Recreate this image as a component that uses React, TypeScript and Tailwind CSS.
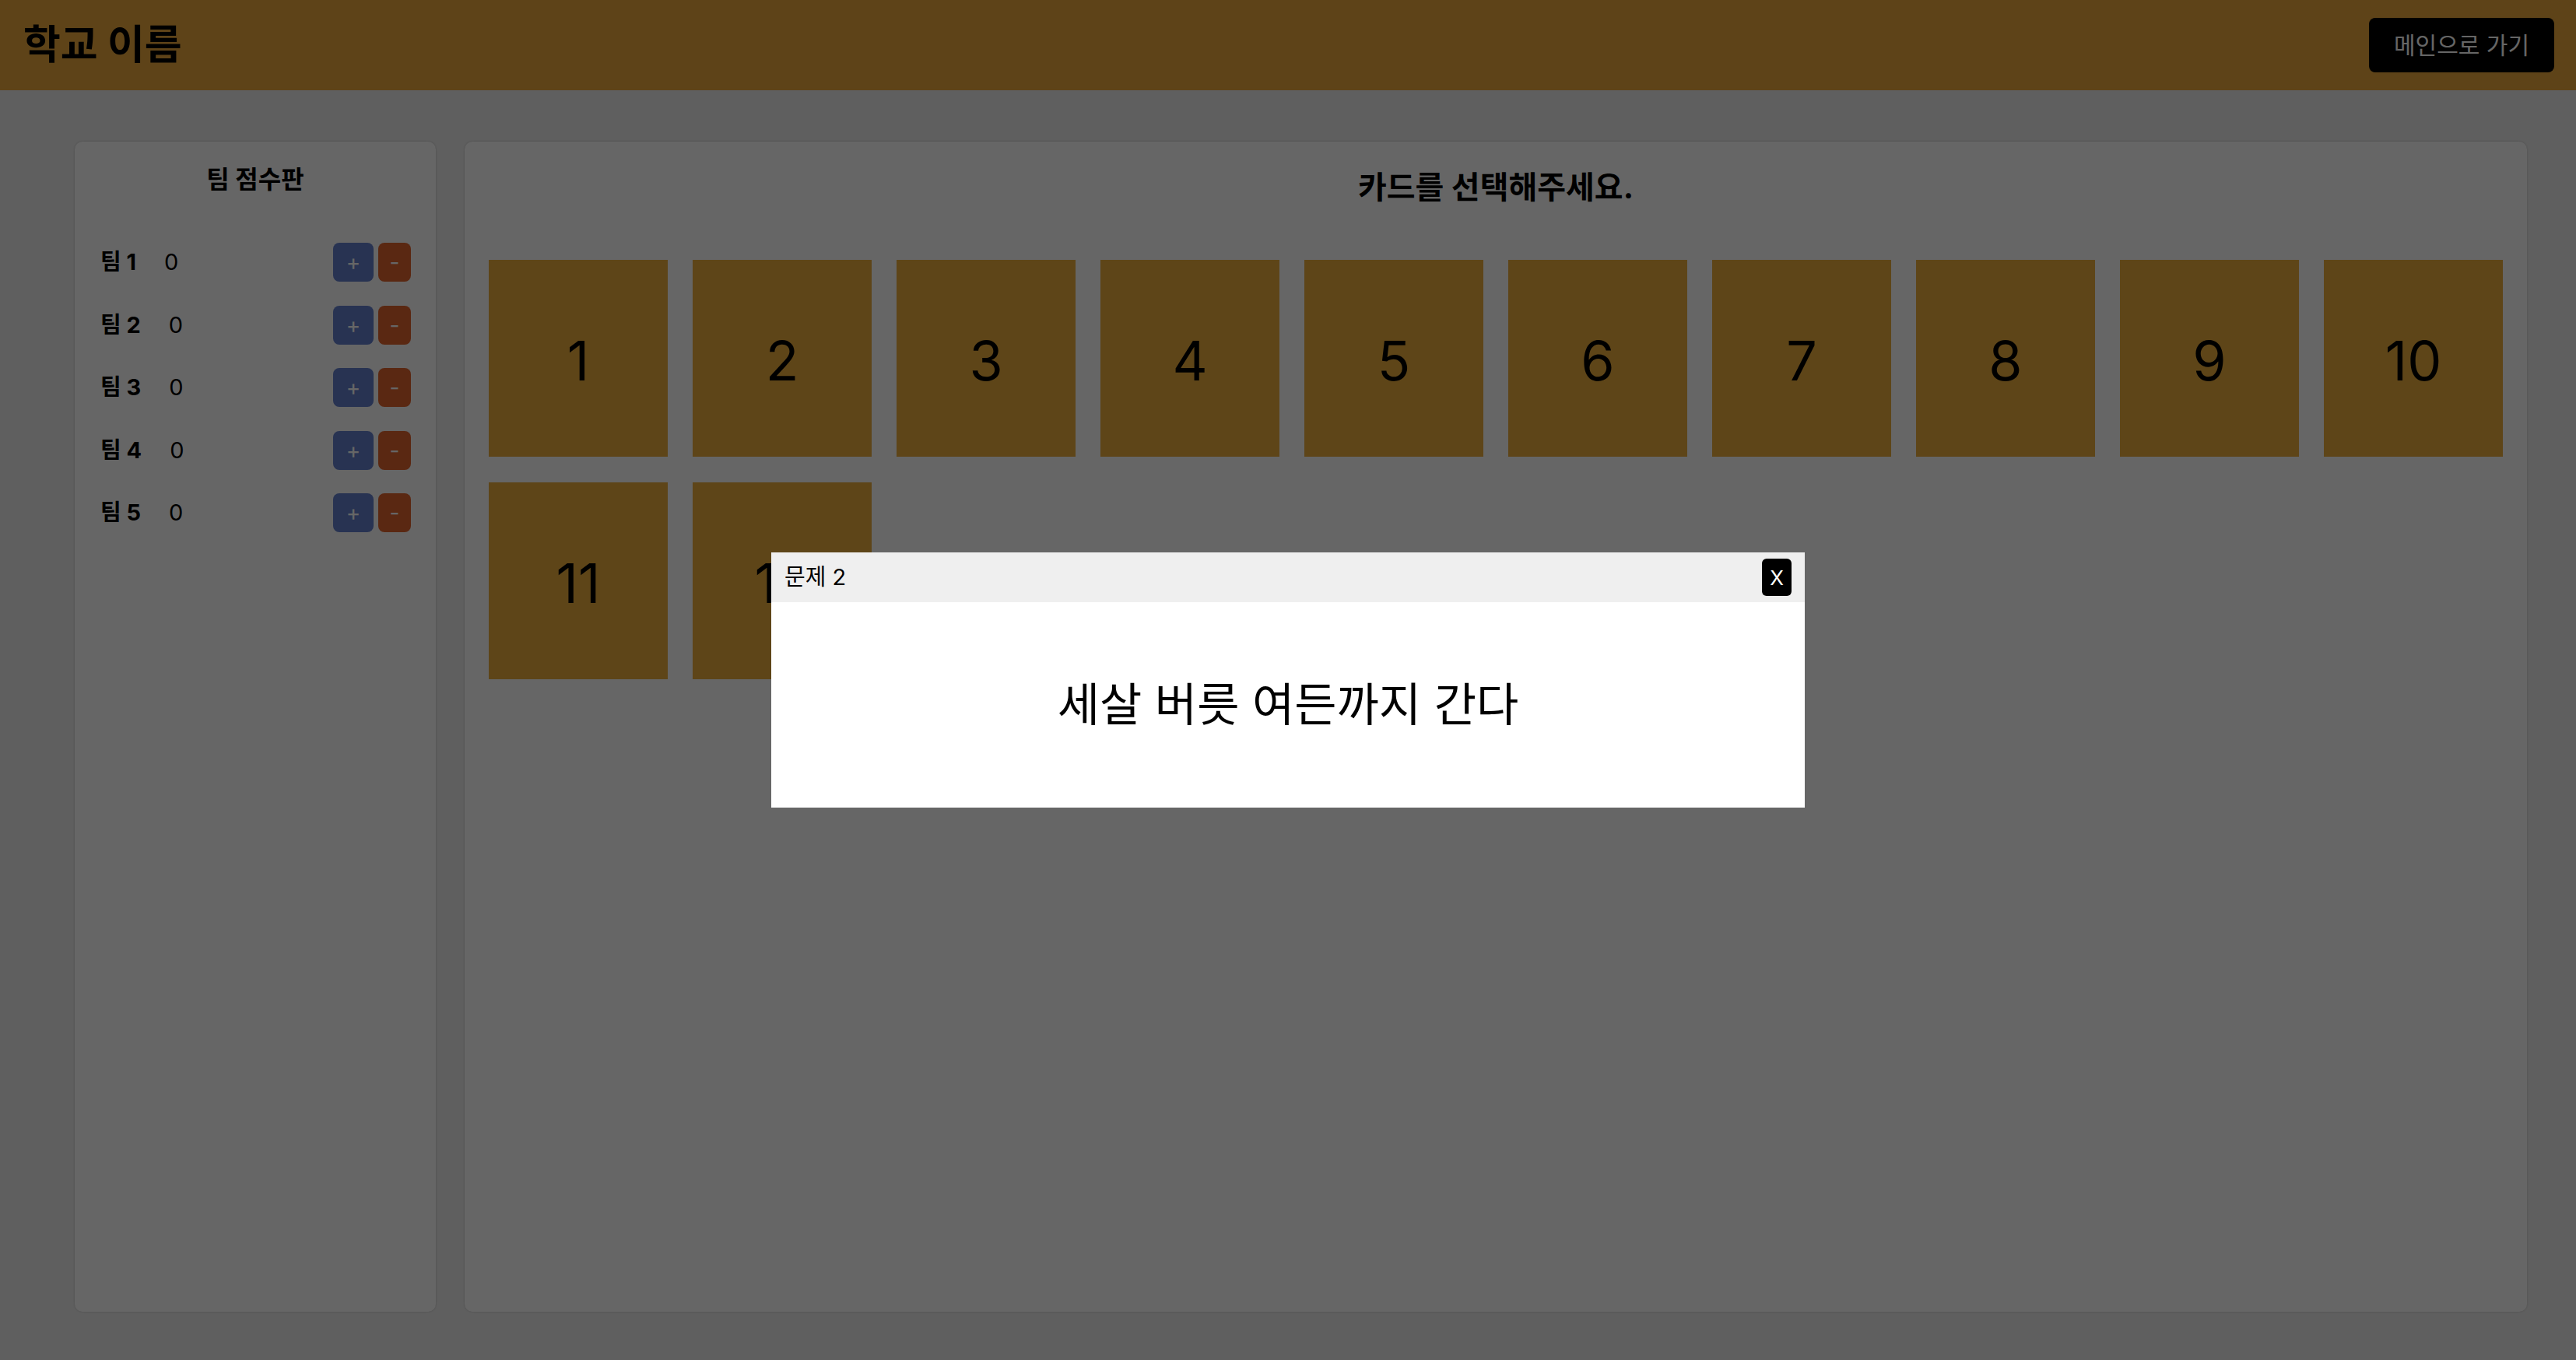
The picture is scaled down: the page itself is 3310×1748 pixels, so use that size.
import { useState } from "react";

const teams = ["팀 1", "팀 2", "팀 3", "팀 4", "팀 5"];
const cards = Array.from({ length: 12 }, (_, i) => i + 1);

export default function App() {
  const [scores, setScores] = useState<number[]>(teams.map(() => 0));

  const change = (idx: number, d: number) =>
    setScores((s) => s.map((v, i) => (i === idx ? v + d : v)));

  return (
    <div className="relative flex h-[1748px] flex-col bg-[#eeeeee] font-['Inter','Noto_Sans_CJK_KR',sans-serif] text-black">
      {/* Header */}
      <header className="flex h-[116px] shrink-0 items-center justify-between bg-[#eba83e] pl-[30px] pr-[28px]">
        <h1 className="text-[52px] font-bold leading-none">학교 이름</h1>
        <button className="h-[70px] w-[238px] rounded-[8px] bg-black text-[30px] text-white">
          메인으로 가기
        </button>
      </header>

      <main className="flex flex-1 gap-[37px] pb-[62px] pl-[96px] pr-[63px] pt-[66px]">
        {/* Score board */}
        <aside className="w-[464px] shrink-0 rounded-[10px] bg-white shadow-[0_0_3px_rgba(0,0,0,0.2)]">
          <h2 className="pt-[29px] text-center text-[32px] font-bold leading-[40px]">팀 점수판</h2>
          <div className="mt-[61px] flex flex-col gap-[30.5px] pl-[33px] pr-[32px]">
            {teams.map((t, i) => (
              <div key={t} className="flex h-[50px] items-center">
                <span className="text-[29px] font-bold">{t}</span>
                <span className="ml-[36px] text-[29px]">{scores[i]}</span>
                <div className="ml-auto flex gap-[6px]">
                  <button
                    onClick={() => change(i, 1)}
                    className="h-[50px] w-[52px] rounded-[8px] bg-[#6480cd] text-[28px] text-white"
                  >
                    +
                  </button>
                  <button
                    onClick={() => change(i, -1)}
                    className="h-[50px] w-[42px] rounded-[8px] bg-[#e1642f] text-[28px] text-white"
                  >
                    -
                  </button>
                </div>
              </div>
            ))}
          </div>
        </aside>

        {/* Cards */}
        <section className="flex-1 rounded-[10px] bg-white shadow-[0_0_3px_rgba(0,0,0,0.2)]">
          <h2 className="pt-[36px] text-center text-[40px] font-bold leading-[46px]">카드를 선택해주세요.</h2>
          <div className="mt-[70px] flex flex-wrap gap-x-[32px] gap-y-[33px] px-[31px]">
            {cards.map((n) => (
              <div
                key={n}
                className="flex h-[253px] w-[230px] items-center justify-center bg-[#ebac3e] pt-[6px] text-[70px]"
              >
                {n}
              </div>
            ))}
          </div>
        </section>
      </main>

      {/* Question modal */}
      <div className="fixed inset-0 flex items-center justify-center bg-black/60">
        <div className="flex h-[328px] w-[1328px] flex-col bg-white">
          <div className="flex h-[64px] items-center justify-between bg-[#efefef] pl-[17px] pr-[17px]">
            <span className="text-[29px]">문제 2</span>
            <button className="h-[48px] w-[38px] rounded-[6px] bg-black text-[26px] text-white">X</button>
          </div>
          <div className="flex flex-1 items-center justify-center text-[59px]">세살 버릇 여든까지 간다</div>
        </div>
      </div>
    </div>
  );
}
